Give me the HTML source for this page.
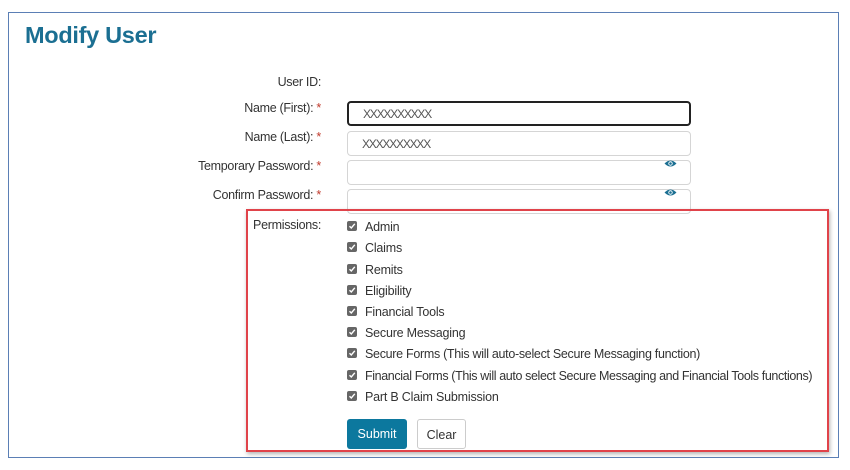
<!DOCTYPE html>
<html><head><meta charset="utf-8"><style>
body{margin:0;width:850px;height:470px;background:#fff;position:relative;overflow:hidden;font-family:"Liberation Sans",sans-serif;color:#333;}
.a{position:absolute}
.frame{left:8px;top:12px;width:831px;height:446px;border:1.5px solid #5b7fb5;box-sizing:border-box}
h1{position:absolute;left:25px;top:22px;margin:0;font-size:23.5px;font-weight:bold;color:#1b6f92;letter-spacing:-0.3px}
.lbl{position:absolute;right:529px;font-size:12.5px;color:#333;white-space:nowrap;letter-spacing:-0.3px}
.lbl b{color:#c0392b;font-weight:normal}
.inp{position:absolute;left:347px;width:344px;height:25px;border:1px solid #d5d5d5;border-radius:4px;box-sizing:border-box;font-size:12px;color:#555;padding:5px 0 0 14px;letter-spacing:-1.2px}
.eye{position:absolute;left:664px;width:13px;height:9px}
.red{left:246px;top:209px;width:583px;height:243px;border:2.5px solid #e0434a;box-sizing:border-box;box-shadow:1px 2px 4px rgba(0,0,0,.3)}
.cb{position:absolute;left:347px;width:10px;height:10px;background:#666;border-radius:2px}
.cb svg{position:absolute;left:1px;top:1px}
.ct{position:absolute;left:365px;font-size:12.5px;color:#333;white-space:nowrap;letter-spacing:-0.2px}
.btn{position:absolute;top:419px;height:30px;border-radius:3px;box-sizing:border-box;font-size:12.5px;text-align:center;line-height:31px}
</style></head><body>
<div class="a frame"></div>
<h1>Modify User</h1>
<div class="lbl" style="top:75px">User ID:</div>
<div class="lbl" style="top:101px">Name (First): <b>*</b></div>
<div class="lbl" style="top:130px">Name (Last): <b>*</b></div>
<div class="lbl" style="top:159px">Temporary Password: <b>*</b></div>
<div class="lbl" style="top:188px">Confirm Password: <b>*</b></div>
<div class="inp" style="top:101px;border:2px solid #222;padding-top:4px">XXXXXXXXXX</div>
<div class="inp" style="top:131px">XXXXXXXXXX</div>
<div class="inp" style="top:160px"></div>
<div class="inp" style="top:189px"></div>
<svg class="eye" style="top:159px" viewBox="0 0 13 9"><path d="M0.5 4.5Q6.5 -1.5 12.5 4.5Q6.5 10.5 0.5 4.5Z" fill="#1b6f92"/><circle cx="6.5" cy="4.5" r="2.2" fill="#fff"/><circle cx="6.5" cy="4.5" r="1.3" fill="#1b6f92"/></svg>
<svg class="eye" style="top:188px" viewBox="0 0 13 9"><path d="M0.5 4.5Q6.5 -1.5 12.5 4.5Q6.5 10.5 0.5 4.5Z" fill="#1b6f92"/><circle cx="6.5" cy="4.5" r="2.2" fill="#fff"/><circle cx="6.5" cy="4.5" r="1.3" fill="#1b6f92"/></svg>
<div class="a red"></div>
<div class="lbl" style="top:218px">Permissions:</div>

<div class="cb" style="top:221px"><svg width="8" height="8"><path d="M1.5 4.2L3.3 6L6.8 1.8" stroke="#fff" stroke-width="1.4" fill="none"/></svg></div><div class="ct" style="top:220px">Admin</div>
<div class="cb" style="top:242px"><svg width="8" height="8"><path d="M1.5 4.2L3.3 6L6.8 1.8" stroke="#fff" stroke-width="1.4" fill="none"/></svg></div><div class="ct" style="top:241px">Claims</div>
<div class="cb" style="top:264px"><svg width="8" height="8"><path d="M1.5 4.2L3.3 6L6.8 1.8" stroke="#fff" stroke-width="1.4" fill="none"/></svg></div><div class="ct" style="top:263px">Remits</div>
<div class="cb" style="top:285px"><svg width="8" height="8"><path d="M1.5 4.2L3.3 6L6.8 1.8" stroke="#fff" stroke-width="1.4" fill="none"/></svg></div><div class="ct" style="top:284px">Eligibility</div>
<div class="cb" style="top:306px"><svg width="8" height="8"><path d="M1.5 4.2L3.3 6L6.8 1.8" stroke="#fff" stroke-width="1.4" fill="none"/></svg></div><div class="ct" style="top:305px">Financial Tools</div>
<div class="cb" style="top:327px"><svg width="8" height="8"><path d="M1.5 4.2L3.3 6L6.8 1.8" stroke="#fff" stroke-width="1.4" fill="none"/></svg></div><div class="ct" style="top:326px">Secure Messaging</div>
<div class="cb" style="top:348px"><svg width="8" height="8"><path d="M1.5 4.2L3.3 6L6.8 1.8" stroke="#fff" stroke-width="1.4" fill="none"/></svg></div><div class="ct" style="top:347px;letter-spacing:-0.3px">Secure Forms (This will auto-select Secure Messaging function)</div>
<div class="cb" style="top:370px"><svg width="8" height="8"><path d="M1.5 4.2L3.3 6L6.8 1.8" stroke="#fff" stroke-width="1.4" fill="none"/></svg></div><div class="ct" style="top:369px;letter-spacing:-0.38px">Financial Forms (This will auto select Secure Messaging and Financial Tools functions)</div>
<div class="cb" style="top:391px"><svg width="8" height="8"><path d="M1.5 4.2L3.3 6L6.8 1.8" stroke="#fff" stroke-width="1.4" fill="none"/></svg></div><div class="ct" style="top:390px">Part B Claim Submission</div>

<div class="btn" style="left:347px;width:60px;background:#0c789e;color:#fff">Submit</div>
<div class="btn" style="left:417px;width:49px;border:1px solid #ccc;color:#333;background:#fff">Clear</div>
</body></html>
